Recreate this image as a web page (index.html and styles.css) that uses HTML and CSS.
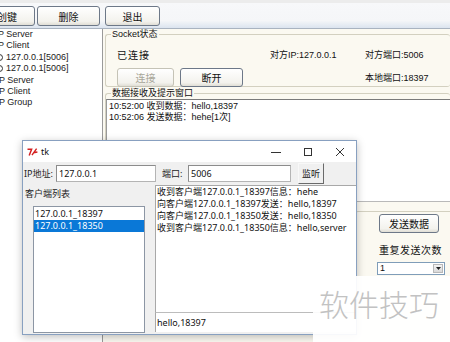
FILE: index.html
```html
<!DOCTYPE html>
<html lang="zh">
<head>
    <meta charset="UTF-8">
    <title>Socket 调试</title>
    <link rel="stylesheet" href="styles.css">
</head>
<body>
    <div class="app">
        <div class="toolbar">
            <button class="xp-btn btn-create">创键</button>
            <button class="xp-btn btn-delete">删除</button>
            <button class="xp-btn btn-exit">退出</button>
        </div>
        <div class="main">
            <div class="tree">
                <ul class="tree-list">
                    <li>TCP Server</li>
                    <li>TCP Client</li>
                    <li class="child"><span class="dot"></span>127.0.0.1[5006]</li>
                    <li class="child"><span class="dot"></span>127.0.0.1[5006]</li>
                    <li>UDP Server</li>
                    <li>UDP Client</li>
                    <li>UDP Group</li>
                </ul>
            </div>
            <div class="right">
                <fieldset class="group socket-group">
                    <legend>Socket状态</legend>
                    <div class="socket-grid">
                        <span class="cjk">已连接</span>
                        <span class="info">对方IP:127.0.0.1</span>
                        <span class="info">对方端口:5006</span>
                        <div class="btn-row">
                            <button class="xp-btn btn-conn" disabled>连接</button>
                            <button class="xp-btn btn-disc">断开</button>
                        </div>
                        <span></span>
                        <span class="info">本地端口:18397</span>
                    </div>
                </fieldset>
                <fieldset class="group data-group">
                    <legend>数据接收及提示窗口</legend>
                    <div class="recv-box">
                        <div>10:52:00 收到数据：hello,18397</div>
                        <div>10:52:06 发送数据：hehe[1次]</div>
                    </div>
                </fieldset>
                <div class="send-area">
                    <div class="send-group">
                        <button class="xp-btn btn-send">发送数据</button>
                        <div class="repeat-label">重复发送次数</div>
                        <div class="combo">
                            <span class="combo-val">1</span>
                            <span class="combo-arrow">
                                <svg width="5" height="3" viewBox="0 0 5 3"><path d="M0 0h5L2.5 3z" fill="#222"/></svg>
                            </span>
                        </div>
                    </div>
                </div>
            </div>
        </div>
    </div>

    <div class="tk-window">
        <div class="tk-title">
            <svg class="tk-icon" width="11" height="8" viewBox="0 0 11 8">
                <path d="M0.5 1.2H4.6L2.2 7.5" stroke="#d42020" stroke-width="1.5" fill="none"/>
                <path d="M5 7.2L9.6 0.6M6.4 4.8L10.4 4" stroke="#d42020" stroke-width="1.4" fill="none"/>
            </svg>
            <span class="tk-name">tk</span>
            <div class="tk-controls">
                <span class="ctl">
                    <svg width="10" height="10" viewBox="0 0 10 10"><path d="M0 5.5h10" stroke="#333" stroke-width="1"/></svg>
                </span>
                <span class="ctl">
                    <svg width="10" height="10" viewBox="0 0 10 10"><rect x="1.5" y="1.5" width="7" height="7" stroke="#333" stroke-width="1" fill="none"/></svg>
                </span>
                <span class="ctl">
                    <svg width="10" height="10" viewBox="0 0 10 10"><path d="M1 1l8 8M9 1l-8 8" stroke="#333" stroke-width="1"/></svg>
                </span>
            </div>
        </div>
        <div class="tk-body">
            <div class="tk-row">
                <span class="tk-label lbl-ip">IP地址:</span>
                <div class="tk-entry entry-ip">127.0.0.1</div>
                <span class="tk-label lbl-port">端口:</span>
                <div class="tk-entry entry-port">5006</div>
                <button class="tk-btn">监听</button>
            </div>
            <div class="tk-panes">
                <div class="tk-left">
                    <div class="tk-label lbl-list">客户端列表</div>
                    <ul class="listbox">
                        <li>127.0.0.1_18397</li>
                        <li class="selected">127.0.0.1_18350</li>
                    </ul>
                </div>
                <div class="tk-right">
                    <div class="tk-text">
                        <div>收到客户端127.0.0.1_18397信息：hehe</div>
                        <div>向客户端127.0.0.1_18397发送：hello,18397</div>
                        <div>向客户端127.0.0.1_18350发送：hello,18350</div>
                        <div>收到客户端127.0.0.1_18350信息：hello,server</div>
                    </div>
                    <div class="tk-input">hello,18397</div>
                </div>
            </div>
        </div>
    </div>

    <div class="watermark">软件技巧</div>
</body>
</html>
```

FILE: styles.css
```css
body {
    margin: 0;
    width: 450px;
    height: 342px;
    overflow: hidden;
    position: relative;
    background-color: #fbf9f1;
    font-family: "Liberation Sans", "Noto Sans CJK SC", sans-serif;
    font-size: 9px;
    color: #111;
}
ul {
    list-style: none;
    margin: 0;
    padding: 0;
}
.cjk {
    font-size: 10px;
    letter-spacing: 1px;
}

/* old style app behind */
.toolbar {
    height: 29px;
    display: flex;
    align-items: flex-start;
    padding-top: 5px;
    box-sizing: border-box;
    border-top: 3px solid #ececec;
    border-bottom: 1px solid #a9b3c0;
    background: linear-gradient(#f7f8fa 0, #f5f6f8 70%, #dbe4ef 100%);
}
.xp-btn {
    font-family: "Noto Sans CJK SC", sans-serif;
    font-size: 10px;
    height: 20px;
    padding: 0;
    border: 1px solid #6d7888;
    border-radius: 3px;
    background: linear-gradient(#ffffff, #f3f2ed 80%, #e0ded5);
    color: #111;
    margin-top: -2px;
}
.btn-create { width: 56px; margin-left: -21px; }
.btn-delete { width: 63px; margin-left: 2px; }
.btn-exit { width: 55px; margin-left: 5px; }

.main {
    display: flex;
    height: 313px;
}
.tree {
    width: 102px;
    background-color: #fff;
    border-right: 1px solid #9a9a9a;
    overflow: hidden;
}
.tree-list {
    margin-left: -14px;
    line-height: 11.4px;
    color: #222;
}
.tree-list li {
    white-space: nowrap;
}
.tree-list .child {
    display: flex;
    align-items: center;
    margin-left: 10px;
}
.dot {
    width: 7px;
    height: 7px;
    border-radius: 50%;
    border: 1px solid #333;
    background: linear-gradient(90deg, #333 50%, #fff 50%);
    margin-right: 3px;
    box-sizing: border-box;
}

.right {
    flex: 1;
    display: flex;
    flex-direction: column;
    padding-left: 2px;
}
.group {
    margin: 0;
    padding: 0;
    border: 1px solid #d3d0c0;
    border-radius: 3px;
    min-width: 0;
}
.group legend {
    font-size: 9px;
    line-height: 10px;
    padding: 0 1px;
    margin-left: 5px;
    color: #111;
}
.socket-group {
    height: 56px;
    border-right: none;
}
.socket-grid {
    display: grid;
    grid-template-columns: 153px 95px auto;
    grid-template-rows: 14px 19px;
    row-gap: 7px;
    align-items: center;
    padding: 8px 0 0 11px;
}
.info {
    font-size: 9px;
}
.btn-row {
    display: flex;
    gap: 6px;
}
.btn-conn {
    width: 57px;
    height: 19px;
    margin: 0;
    color: #a8a699;
    border-color: #c5c3b6;
}
.btn-disc {
    width: 63px;
    height: 19px;
    margin: 0;
}
.data-group {
    margin-top: 1px;
    height: 113px;
    border-right: none;
    border-bottom: none;
}
.recv-box {
    margin-top: 1px;
    height: 103px;
    background-color: #fff;
    border-top: 1px solid #7a7a7a;
    border-left: 1px solid #9a9a9a;
    border-bottom: 1px solid #b9b9b9;
    padding: 1px 0 0 2px;
    line-height: 11px;
    box-sizing: border-box;
}
.send-area {
    flex: 1;
    padding: 9px 0 0 250px;
}
.send-group {
    height: 120px;
    border-top: 1px solid #d3d0c0;
    border-left: 1px solid #d3d0c0;
    border-radius: 3px 0 0 0;
    padding: 2px 0 0 23px;
}
.btn-send {
    width: 60px;
    height: 19px;
    margin: 0;
}
.repeat-label {
    font-family: "Noto Sans CJK SC", sans-serif;
    font-size: 10px;
    letter-spacing: 0.5px;
    margin-top: 10px;
    line-height: 14px;
}
.combo {
    margin: 5px 0 0 -2px;
    width: 68px;
    height: 13px;
    background: #fff;
    border: 1px solid #7f9db9;
    box-sizing: border-box;
    display: flex;
    align-items: center;
    justify-content: space-between;
}
.combo-val {
    padding-left: 2px;
    line-height: 11px;
}
.combo-arrow {
    width: 10px;
    height: 9px;
    margin-right: 1px;
    background: linear-gradient(#f4f4f4, #d8d8d8);
    border: 1px solid #b8b8b8;
    box-sizing: border-box;
    display: flex;
    align-items: center;
    justify-content: center;
}

/* tk window on top */
.tk-window {
    position: absolute;
    left: 22px;
    top: 140px;
    width: 335px;
    height: 195px;
    box-sizing: border-box;
    border: 1px solid #88a0c0;
    background-color: #f0f0f0;
    box-shadow: 0 2px 8px rgba(0, 0, 0, 0.25);
    font-family: "Noto Sans", "Noto Sans CJK SC", sans-serif;
    font-size: 9px;
    display: flex;
    flex-direction: column;
}
.tk-title {
    height: 21px;
    background-color: #fff;
    display: flex;
    align-items: center;
    padding-left: 4px;
    flex-shrink: 0;
}
.tk-icon {
    margin-right: 3px;
}
.tk-name {
    font-size: 9px;
    color: #111;
}
.tk-controls {
    margin-left: auto;
    display: flex;
}
.ctl {
    width: 32px;
    height: 21px;
    display: flex;
    align-items: center;
    justify-content: center;
}
.tk-row {
    height: 23px;
    display: flex;
    align-items: center;
    padding-left: 1px;
    flex-shrink: 0;
}
.tk-label {
    color: #222;
    line-height: 12px;
}
.lbl-ip { width: 32px; }
.lbl-port { width: 26px; padding-left: 6px; }
.tk-entry {
    height: 17px;
    box-sizing: border-box;
    background-color: #fff;
    border: 1px solid #b4b4b4;
    border-top-color: #8c8c8c;
    border-left-color: #8c8c8c;
    line-height: 15px;
    padding-left: 2px;
    color: #111;
}
.entry-ip { width: 100px; }
.entry-port { width: 103px; }
.tk-btn {
    margin-left: 7px;
    width: 26px;
    height: 21px;
    padding: 0;
    font-family: "Noto Sans CJK SC", sans-serif;
    font-size: 9px;
    background-color: #f0f0f0;
    border: 1px solid #f8f8f8;
    border-right-color: #6a6a6a;
    border-bottom-color: #6a6a6a;
    color: #111;
}
.tk-panes {
    flex: 1;
    display: flex;
}
.tk-left {
    width: 132px;
    padding-left: 2px;
    box-sizing: border-box;
}
.lbl-list {
    margin-top: 3px;
    height: 12px;
}
.listbox {
    margin: 6px 0 0 8px;
    width: 112px;
    height: 127px;
    box-sizing: border-box;
    background-color: #fff;
    border: 1px solid #8c96a4;
    padding-top: 1px;
}
.listbox li {
    line-height: 12px;
    padding-left: 1px;
    color: #111;
}
.listbox .selected {
    background-color: #0a78d7;
    color: #fff;
}
.tk-right {
    flex: 1;
    display: flex;
    flex-direction: column;
}
.tk-text {
    flex: 1;
    background-color: #fff;
    border-top: 1px solid #a8a8a8;
    border-left: 1px solid #a8a8a8;
    line-height: 12px;
    padding-left: 1px;
    color: #111;
}
.tk-input {
    height: 20px;
    box-sizing: border-box;
    background-color: #fff;
    border-top: 1px solid #bcbcbc;
    border-left: 1px solid #a8a8a8;
    line-height: 19px;
    padding-left: 1px;
    color: #111;
    margin-bottom: 1px;
}

.watermark {
    position: absolute;
    left: 313px;
    top: 276px;
    width: 137px;
    height: 66px;
    background-color: rgba(255, 255, 255, 0.93);
    font-family: "Noto Sans CJK SC", sans-serif;
    font-weight: 300;
    font-size: 30px;
    line-height: 34px;
    color: #c2c2c2;
    padding: 10px 0 0 6px;
    box-sizing: border-box;
    white-space: nowrap;
}
```
